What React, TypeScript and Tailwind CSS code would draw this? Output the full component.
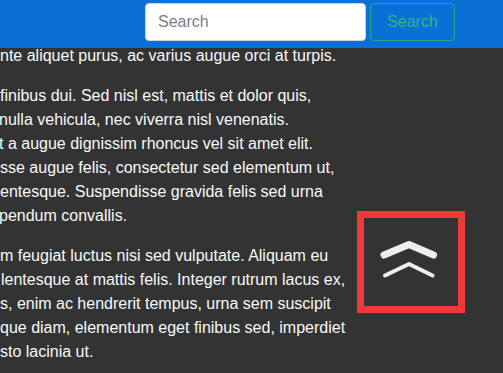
import React from "react";

const paragraphs = [
  [
    { text: "ulvinar leo, sit amet tincidunt arcu. Suspendisse ut", cls: "ml-0" },
    { text: "nte aliquet purus, ac varius augue orci at turpis.", cls: "ml-0" },
  ],
  [
    { text: "finibus dui. Sed nisl est, mattis et dolor quis,", cls: "ml-0" },
    { text: "nulla vehicula, nec viverra nisl venenatis.", cls: "-ml-px" },
    { text: "t a augue dignissim rhoncus vel sit amet elit.", cls: "-ml-px" },
    { text: "sse augue felis, consectetur sed elementum ut,", cls: "ml-0" },
    { text: "entesque. Suspendisse gravida felis sed urna", cls: "ml-0" },
    { text: "pendum convallis.", cls: "-ml-px" },
  ],
  [
    { text: "m feugiat luctus nisi sed vulputate. Aliquam eu", cls: "ml-0" },
    { text: "lentesque at mattis felis. Integer rutrum lacus ex,", cls: "ml-px" },
    { text: "s, enim ac hendrerit tempus, urna sem suscipit", cls: "ml-0" },
    { text: "que diam, elementum eget finibus sed, imperdiet", cls: "ml-0" },
    { text: "sto lacinia ut.", cls: "ml-0" },
  ],
];

function ChevronsUp() {
  return (
    <svg width="94" height="88" viewBox="0 0 94 88" fill="none">
      <polyline
        points="20,37 45,26.5 69.5,37"
        stroke="#eeeeee"
        strokeWidth="7"
        strokeLinecap="round"
        strokeLinejoin="round"
      />
      <polyline
        points="21,57.5 45,46 68.5,57.5"
        stroke="#eeeeee"
        strokeWidth="4"
        strokeLinecap="round"
        strokeLinejoin="round"
      />
    </svg>
  );
}

export default function App() {
  return (
    <div className="relative h-[373px] w-[503px] overflow-hidden bg-[#333333] font-['Liberation_Sans',Arial,sans-serif] text-[16px] leading-6 text-[#f8f9fa]">
      {/* Fixed navbar over the scrolled page */}
      <header className="absolute inset-x-0 top-0 z-10 flex h-12 items-start justify-end gap-1 bg-[#0a6fd6] pr-12 pt-[3px]">
        <input
          type="text"
          placeholder="Search"
          className="h-[38px] w-[221px] rounded border border-[#ced4da] bg-white px-3 text-[16px] text-[#495057] outline-none placeholder:text-[#7a7f85]"
        />
        <button className="h-[38px] w-[85px] rounded border border-[#22ad88] text-[16px] text-[#2db982]">
          Search
        </button>
      </header>

      <main className="flex flex-col gap-4 overflow-hidden pt-[20px]">
        {paragraphs.map((lines, i) => (
          <p key={i} className="flex flex-col">
            {lines.map((line, j) => (
              <span key={j} className={`whitespace-nowrap ${line.cls}`}>
                {line.text}
              </span>
            ))}
          </p>
        ))}
      </main>

      {/* Back to top button */}
      <button className="absolute bottom-[60px] right-[38px] z-10 flex h-[102px] w-[108px] items-center justify-center border-[7px] border-[#ef3a3a]">
        <ChevronsUp />
      </button>
    </div>
  );
}
